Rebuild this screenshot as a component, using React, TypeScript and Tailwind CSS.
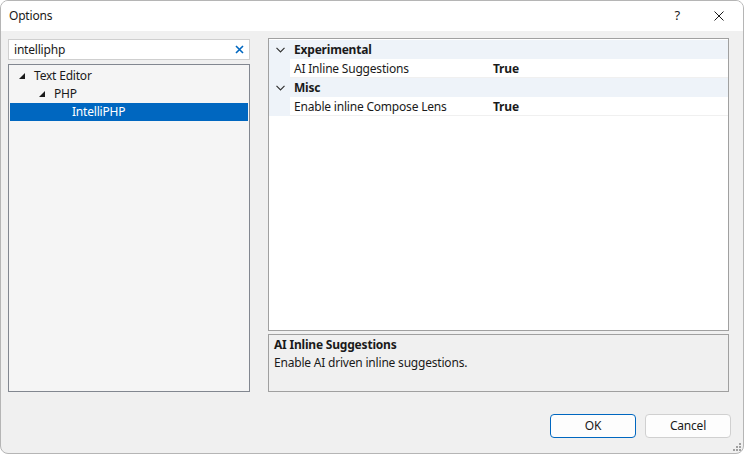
import React from 'react'

const font = { fontFamily: '"Noto Sans", "Open Sans", Arial, sans-serif' }

function Tri({ className = '' }: { className?: string }) {
  return (
    <svg width="6" height="6" viewBox="0 0 6 6" className={className}>
      <path d="M6 0 L6 6 L0 6 Z" fill="#1a1a1a" />
    </svg>
  )
}

function Chevron() {
  return (
    <svg width="9" height="6" viewBox="0 0 9 6">
      <path d="M0.5 0.8 L4.5 4.8 L8.5 0.8" fill="none" stroke="#333" strokeWidth="1.2" />
    </svg>
  )
}

function CategoryRow({ label }: { label: string }) {
  return (
    <div className="flex h-[19px] items-center bg-[#eef3f9]">
      <div className="flex w-[21px] shrink-0 justify-center pl-[2px]">
        <Chevron />
      </div>
      <span className="pl-[4px] font-bold">{label}</span>
    </div>
  )
}

function PropRow({ label, value }: { label: string; value: string }) {
  return (
    <div className="flex h-[19px] items-stretch">
      <div className="w-[21px] shrink-0 bg-[#eef3f9]" />
      <div className="flex w-[199px] shrink-0 items-center border-b border-[#f0f0f0] pl-[4px] pt-[1px]">{label}</div>
      <div className="flex flex-1 items-center border-b border-[#f0f0f0] pl-[4px] pt-[1px] font-bold">{value}</div>
    </div>
  )
}

export default function App() {
  return (
    <div className="bg-white">
      <div
        className="flex h-[454px] w-[744px] flex-col overflow-hidden rounded-[8px] border border-[#b5b5b5] bg-[#f0f0f0] text-[12px] tracking-[-0.2px] text-[#1a1a1a]"
        style={font}
      >
        {/* title bar */}
        <div className="flex h-[30px] shrink-0 items-center bg-white pl-[8px]">
          <span className="flex-1">Options</span>
          <span className="mr-[34px] text-[13px]">?</span>
          <svg width="10" height="10" viewBox="0 0 10 10" className="mr-[19px]">
            <path d="M0.5 0.5 L9.5 9.5 M9.5 0.5 L0.5 9.5" stroke="#1a1a1a" strokeWidth="1" />
          </svg>
        </div>

        {/* content */}
        <div className="flex h-[361px] shrink-0 pl-[7px] pt-[7px]">
          <div className="flex w-[242px] shrink-0 flex-col pt-[1px]">
            <div className="flex h-[21px] items-center border border-[#cfcfcf] bg-white pl-[5px] pr-[5px]">
              <span className="flex-1">intelliphp</span>
              <svg width="9" height="9" viewBox="0 0 9 9">
                <path d="M1 1 L8 8 M8 1 L1 8" stroke="#0067c0" strokeWidth="1.6" />
              </svg>
            </div>
            <div className="mt-[4px] flex-1 border border-[#828790] bg-[#f5f5f5] px-[1px] pt-[2px]">
              <div className="flex h-[18px] items-center pl-[9px]">
                <Tri />
                <span className="pl-[9px]">Text Editor</span>
              </div>
              <div className="flex h-[18px] items-center pl-[29px]">
                <Tri />
                <span className="pl-[9px]">PHP</span>
              </div>
              <div className="flex h-[18px] items-center bg-[#0067c0] pl-[62px] text-white">IntelliPHP</div>
            </div>
          </div>

          <div className="ml-[18px] flex w-[461px] shrink-0 flex-col">
            <div className="h-[293px] border border-[#a0a0a0] bg-white pt-[1px]">
              <CategoryRow label="Experimental" />
              <PropRow label="AI Inline Suggestions" value="True" />
              <CategoryRow label="Misc" />
              <PropRow label="Enable inline Compose Lens" value="True" />
            </div>
            <div className="mt-[3px] flex-1 border border-[#a0a0a0] bg-[#f0f0f0] px-[5px] pt-[1px]">
              <div className="font-bold leading-[18px]">AI Inline Suggestions</div>
              <div className="leading-[18px]">Enable AI driven inline suggestions.</div>
            </div>
          </div>
        </div>

        {/* footer */}
        <div className="relative flex flex-1 justify-end pr-[12px] pt-[22px]">
          <button className="h-[24px] w-[86px] rounded-[4px] border border-[#0067c0] bg-[#fdfdfd] text-[12px]">OK</button>
          <button className="ml-[9px] h-[24px] w-[86px] rounded-[4px] border border-[#d0d0d0] bg-[#fdfdfd] text-[12px]">Cancel</button>
          <svg width="8" height="8" viewBox="0 0 8 8" className="absolute bottom-[2px] right-[2px]">
            <g fill="#a0a0a0">
              <rect x="6" y="0" width="2" height="2" />
              <rect x="3" y="3" width="2" height="2" />
              <rect x="6" y="3" width="2" height="2" />
              <rect x="0" y="6" width="2" height="2" />
              <rect x="3" y="6" width="2" height="2" />
              <rect x="6" y="6" width="2" height="2" />
            </g>
          </svg>
        </div>
      </div>
    </div>
  )
}
